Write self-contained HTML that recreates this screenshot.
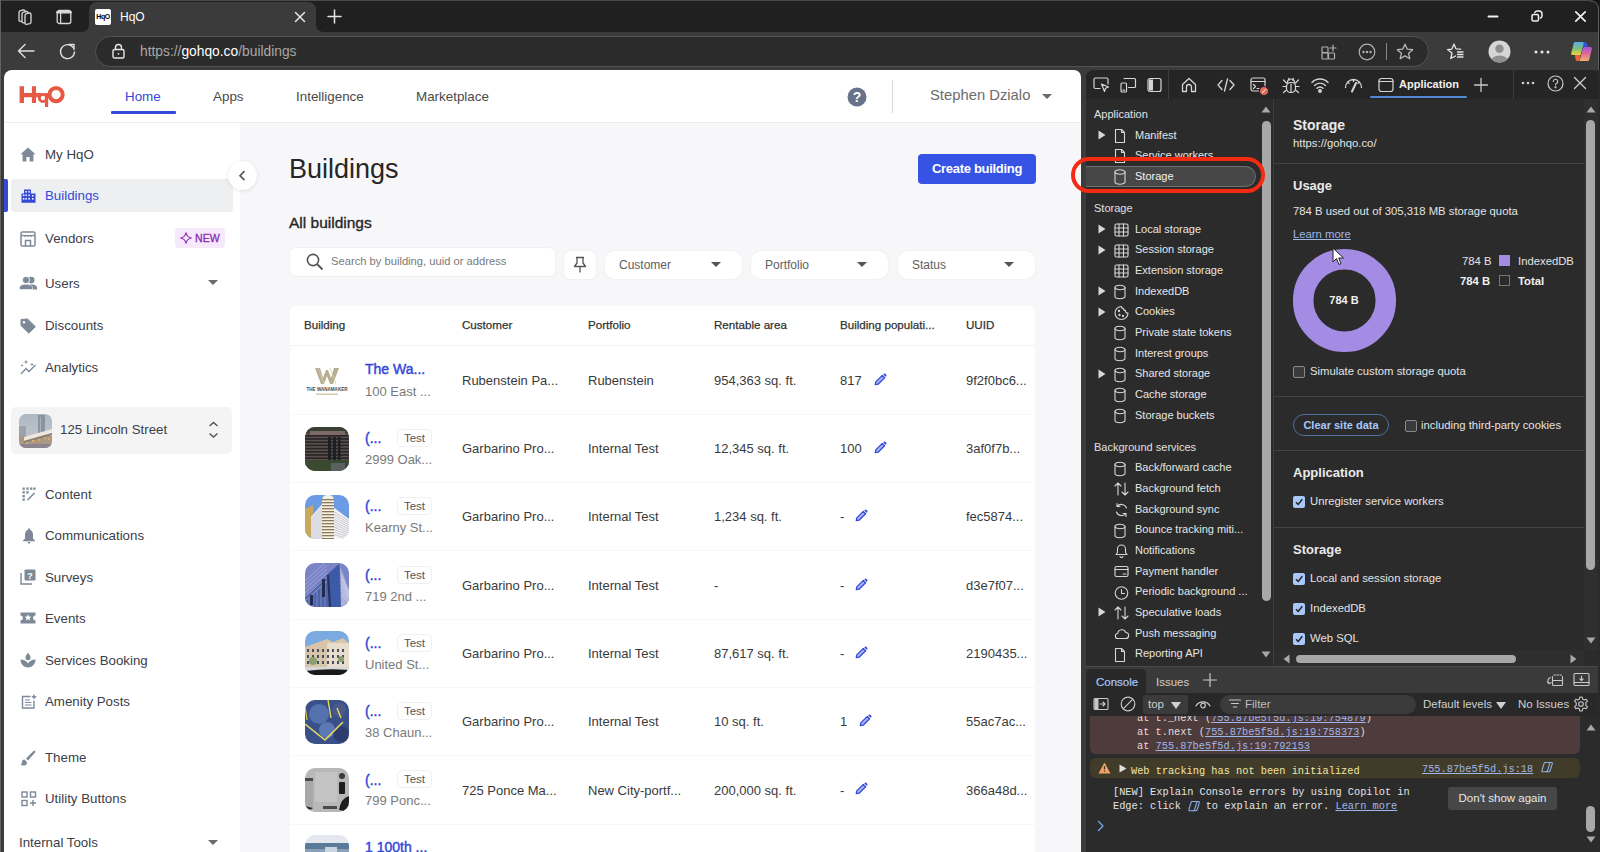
<!DOCTYPE html>
<html><head><meta charset="utf-8">
<style>
*{box-sizing:border-box;margin:0;padding:0}
html,body{width:1600px;height:852px;overflow:hidden;background:#3b3b3b;font-family:"Liberation Sans",sans-serif}
.a{position:absolute}
svg{display:block;overflow:visible}
.ic{position:absolute;fill:none;stroke:#d0d0d0;stroke-width:1.3;stroke-linecap:round;stroke-linejoin:round}
/* chrome */
#tabstrip{left:0;top:0;width:1600px;height:32px;background:#202020;border-top:1px solid #4a4a4a}
#acttab{left:89px;top:2px;width:227px;height:31px;background:#3b3b3b;border-radius:8px 8px 0 0}
#toolbar{left:0;top:32px;width:1600px;height:38px;background:#3b3b3b}
#addr{left:95px;top:36px;width:1334px;height:31px;background:#2b2b2b;border:1px solid #525252;border-radius:16px}
.ct{color:#fff;font-size:13px;white-space:nowrap}
/* page */
#page{left:4px;top:70px;width:1077px;height:782px;background:#fff;border-radius:8px 7px 0 0;overflow:hidden}
#dt{left:1086px;top:70px;width:514px;height:782px;background:#2a2a2a;border-radius:8px 0 0 0;overflow:hidden}
.nav{font-size:13.4px;color:#4a4a4a;white-space:nowrap}
.side{font-size:13.3px;white-space:nowrap}
.th{font-size:11.6px;color:#333;white-space:nowrap;-webkit-text-stroke:0.25px #333}
.td{font-size:13px;color:#3a3a3a;white-space:nowrap}
.dts{font-size:11px;white-space:nowrap}
.dtm{font-size:11.3px;color:#e3e3e3;white-space:nowrap}
.cb{width:12px;height:12px;border:1px solid #8a8a8a;border-radius:2px;background:#3a3a3a}
.mono{font-family:"Liberation Mono",monospace;font-size:10.3px;white-space:nowrap;line-height:14px}
.lk{color:#9fb7e8;text-decoration:underline}
</style></head><body>
<div id="tabstrip" class="a"></div>
<div class="a" style="left:0;top:0;width:1px;height:852px;background:#626262;z-index:5"></div>
<div id="acttab" class="a"></div>
<!-- tab bottom flares -->
<svg class="a" style="left:81px;top:24px" width="8" height="8"><path d="M0 8 Q8 8 8 0 V8Z" fill="#3b3b3b"/></svg>
<svg class="a" style="left:316px;top:24px" width="8" height="8"><path d="M8 8 Q0 8 0 0 V8Z" fill="#3b3b3b"/></svg>
<div id="toolbar" class="a"></div>
<!-- workspaces icon -->
<svg class="ic" style="left:16px;top:8px;stroke:#d8d8d8;stroke-width:1.3" width="18" height="18" viewBox="0 0 18 18"><path d="M3 4.5Q3 3 4.5 2.7L7.5 2Q9 1.8 9 3.3V11Q9 12.3 7.8 12.6L4.5 13.3Q3 13.6 3 12Z" fill="#202020"/><path d="M6 6Q6 4.5 7.5 4.2L10.5 3.5Q12 3.3 12 4.8V12.5Q12 13.8 10.8 14.1L7.5 14.8Q6 15.1 6 13.5Z" fill="#202020"/><path d="M9 7.5Q9 6 10.5 5.7L13.5 5Q15 4.8 15 6.3V14Q15 15.3 13.8 15.6L10.5 16.3Q9 16.6 9 15Z" fill="#202020"/></svg>
<!-- vertical tabs icon -->
<svg class="ic" style="left:56px;top:9px;stroke:#d8d8d8;stroke-width:1.3" width="16" height="16" viewBox="0 0 16 16"><rect x="1.2" y="1.5" width="13.6" height="13" rx="2"/><path d="M1.5 3.2H14.5" stroke-width="2.6"/><path d="M4.6 4V14.2"/></svg>
<!-- favicon -->
<div class="a" style="left:95px;top:9px;width:16px;height:16px;background:#fff;border-radius:2px;font:bold 7px 'Liberation Sans';color:#000;text-align:center;line-height:16px;letter-spacing:-0.5px">HqO</div>
<div class="a ct" style="left:120px;top:10px;font-size:12px">HqO</div>
<svg class="ic" style="left:294px;top:11px;stroke:#e6e6e6;stroke-width:1.5" width="12" height="12"><path d="M1.5 1.5L10.5 10.5M10.5 1.5L1.5 10.5"/></svg>
<svg class="ic" style="left:327px;top:9px;stroke:#e6e6e6;stroke-width:1.5" width="15" height="15"><path d="M7.5 1V14M1 7.5H14"/></svg>
<!-- window controls -->
<svg class="ic" style="left:1488px;top:15px;stroke:#f0f0f0;stroke-width:2" width="10" height="3"><path d="M0.5 1.5H9.5"/></svg>
<svg class="ic" style="left:1531px;top:10px;stroke:#f0f0f0;stroke-width:1.5" width="12" height="13"><rect x="1" y="4.5" width="6.5" height="6.5" rx="1.5"/><path d="M3.8 2.5A3 3 0 0 1 6.5 1H8A3 3 0 0 1 11 4V5.5A3 3 0 0 1 9.5 8.2"/></svg>
<svg class="ic" style="left:1575px;top:11px;stroke:#f0f0f0;stroke-width:1.7" width="11" height="11"><path d="M0.8 0.8L10.2 10.2M10.2 0.8L0.8 10.2"/></svg>
<!-- nav -->
<svg class="ic" style="left:17px;top:43px;stroke:#e0e0e0;stroke-width:1.4" width="18" height="16"><path d="M17 8H1.5M8 1.5L1.5 8L8 14.5"/></svg>
<svg class="ic" style="left:59px;top:43px;stroke:#e0e0e0;stroke-width:1.4" width="17" height="17"><path d="M14.5 5A7 7 0 1 0 15.5 9"/><path d="M10 1.5H15V6.5"/></svg>
<div id="addr" class="a"></div>
<svg class="ic" style="left:112px;top:43px;stroke:#e6e6e6;stroke-width:1.4" width="13" height="16"><rect x="1" y="6.5" width="11" height="8.5" rx="1.5"/><path d="M3.5 6.5V4.5a3 3 0 0 1 6 0V6.5"/><circle cx="6.5" cy="10.8" r="0.9" fill="#e6e6e6" stroke="none"/></svg>
<div class="a" style="left:140px;top:44px;font-size:13.8px;color:#a8a8a8;white-space:nowrap">https://<span style="color:#fff">gohqo.co</span>/buildings</div>
<!-- right icons -->
<svg class="ic" style="left:1321px;top:44px;stroke:#b0b0b0;stroke-width:1.2" width="17" height="16"><rect x="1" y="3" width="6" height="5.5" rx="0.8"/><rect x="1" y="9" width="6" height="6" rx="0.8"/><rect x="7.5" y="9" width="6" height="6" rx="0.8"/><path d="M12 1V7M9 4H15"/></svg>
<svg class="ic" style="left:1358px;top:43px;stroke:#b0b0b0;stroke-width:1.2" width="18" height="18"><circle cx="9" cy="9" r="7.8"/><circle cx="5.5" cy="9" r="0.6" fill="#b0b0b0"/><circle cx="9" cy="9" r="0.6" fill="#b0b0b0"/><circle cx="12.5" cy="9" r="0.6" fill="#b0b0b0"/></svg>
<div class="a" style="left:1386px;top:43px;width:1px;height:17px;background:#8a8a8a"></div>
<svg class="ic" style="left:1396px;top:43px;stroke:#b8b8b8;stroke-width:1.3" width="18" height="17"><path d="M9 1.2L11.3 6.2L16.7 6.7L12.6 10.3L13.8 15.7L9 12.9L4.2 15.7L5.4 10.3L1.3 6.7L6.7 6.2Z"/></svg>
<svg class="ic" style="left:1446px;top:43px;stroke:#e6e6e6;stroke-width:1.3" width="20" height="17"><path d="M8 1.2L10 5.8L14.6 6.2M6 10L1.5 6.6L5.8 6.1L8 1.2M6 10L4.8 15.5L9.5 13"/><path d="M11.5 9H17M11.5 11.5H17M11.5 14H17"/></svg>
<svg class="a" style="left:1488px;top:40px" width="23" height="23"><circle cx="11.5" cy="11.5" r="11" fill="#d6d6d6"/><circle cx="11.5" cy="8.8" r="4.2" fill="#8f8f8f"/><path d="M3.5 19a9 6.5 0 0 1 16 0 A11 11 0 0 1 3.5 19Z" fill="#8f8f8f"/></svg>
<svg class="a" style="left:1534px;top:50px" width="16" height="4"><circle cx="2" cy="2" r="1.5" fill="#e8e8e8"/><circle cx="8" cy="2" r="1.5" fill="#e8e8e8"/><circle cx="14" cy="2" r="1.5" fill="#e8e8e8"/></svg>
<svg class="a" style="left:1570px;top:41px" width="23" height="21" viewBox="0 0 23 21">
<defs><linearGradient id="cpl" x1="0" y1="0" x2="0" y2="1"><stop offset="0" stop-color="#58aef2"/><stop offset="0.5" stop-color="#7cc07a"/><stop offset="1" stop-color="#ecd23a"/></linearGradient>
<linearGradient id="cpr" x1="0" y1="0" x2="0" y2="1"><stop offset="0" stop-color="#a552e0"/><stop offset="0.5" stop-color="#e46a92"/><stop offset="1" stop-color="#f4b26a"/></linearGradient></defs>
<path d="M12 1H15Q17 1 17.5 3.5L18.3 6.5H13Z" fill="#2f52d6"/>
<path d="M5 14H10.5L9.5 20H7.5Q6 20 5.6 18.5Z" fill="#e8623e"/>
<path d="M5 1H12.5Q14 1 13.6 2.8L10.6 14H2.5Q0.8 14 1.2 12.2L3.6 2.6Q4 1 5 1Z" fill="url(#cpl)"/>
<path d="M14.5 6H20.5Q22.3 6 21.9 7.8L19.3 18.4Q18.9 20 17.5 20H9.6L12.8 7.6Q13.2 6 14.5 6Z" fill="url(#cpr)"/>
</svg>
<div class="a" style="left:1598px;top:8px;width:1px;height:844px;background:#5e5e5e"></div><div class="a" style="left:1599px;top:0;width:1px;height:852px;background:#161616"></div><svg class="a" style="left:1590px;top:0" width="10" height="10"><path d="M0 0H10V10H9V8A8 8 0 0 0 1 0.5Z" fill="#161616"/><path d="M0 1A8 7.5 0 0 1 8.5 9" fill="none" stroke="#5e5e5e" stroke-width="1"/></svg>


<div id="page" class="a"></div>
<!-- header -->
<div class="a" style="left:4px;top:122px;width:1077px;height:1px;background:#ececef"></div>
<svg class="a" style="left:14px;top:80px" width="60" height="32" viewBox="0 0 60 32"><g fill="#e65a43">
<path d="M5.6 6.2H10V13H17.9V6.2H22V13H27V17.3H22V22.9H17.9V17.3H10V22.9H5.6Z"/>
<rect x="31" y="13" width="3.2" height="14" rx="0.5"/>
</g>
<circle cx="28.9" cy="18" r="3.6" fill="none" stroke="#e65a43" stroke-width="2.8"/>
<circle cx="42.1" cy="14.6" r="6.6" fill="none" stroke="#e65a43" stroke-width="4"/>
<path d="M33.8 11.5L36.5 8.5L37.5 11Z" fill="#e65a43"/>
</svg>
<div class="a nav" style="left:125px;top:89px;color:#3549d9">Home</div>
<div class="a" style="left:111px;top:111px;width:65px;height:2.5px;background:#3549d9;border-radius:1px"></div>
<div class="a nav" style="left:213px;top:89px">Apps</div>
<div class="a nav" style="left:296px;top:89px">Intelligence</div>
<div class="a nav" style="left:416px;top:89px">Marketplace</div>
<svg class="a" style="left:847px;top:87px" width="20" height="20"><circle cx="10" cy="10" r="9.5" fill="#67738a"/><text x="10" y="15" text-anchor="middle" font-family="Liberation Sans" font-weight="bold" font-size="14" fill="#fff">?</text></svg>
<div class="a" style="left:892px;top:80px;width:1px;height:33px;background:#d8d8d8"></div>
<div class="a" style="left:930px;top:87px;font-size:14.8px;color:#6b6b6b;white-space:nowrap">Stephen Dzialo</div>
<svg class="a" style="left:1042px;top:94px" width="10" height="5"><path d="M0 0H10L5 5Z" fill="#6b6b6b"/></svg>
<!-- content bg -->
<div class="a" style="left:240px;top:123px;width:841px;height:729px;background:#f7f7f9"></div>
<!-- sidebar -->
<div class="a" style="left:4px;top:179px;width:4px;height:33px;background:#3549d9;border-radius:0 2px 2px 0"></div>
<div class="a" style="left:11px;top:179px;width:222px;height:33px;background:#eeeff1;border-radius:4px"></div>
<div class="a" style="left:175px;top:228px;width:50px;height:20px;background:#f5e9fb;border-radius:4px"></div>
<svg class="a" style="left:180px;top:232px" width="12" height="12"><path d="M6 0.5Q6.8 5.2 11.5 6Q6.8 6.8 6 11.5Q5.2 6.8 0.5 6Q5.2 5.2 6 0.5Z" fill="none" stroke="#8a2bb0" stroke-width="1.2"/></svg>
<div class="a" style="left:195px;top:232px;font-size:10.6px;color:#8a2bb0;-webkit-text-stroke:0.3px #8a2bb0">NEW</div>
<div class="a" style="left:11px;top:407px;width:221px;height:47px;background:#f4f4f4;border-radius:5px"></div>
<div class="a" style="left:19px;top:414px;width:33px;height:34px;border-radius:7px;overflow:hidden"><svg width="33" height="34" viewBox="0 0 33 34"><defs><linearGradient id="lsky" x1="0" y1="0" x2="0" y2="1"><stop offset="0" stop-color="#aeb9c4"/><stop offset="1" stop-color="#c4c8cc"/></linearGradient></defs><rect width="33" height="34" fill="url(#lsky)"/><rect x="19" y="1" width="7" height="22" fill="#8994a0"/><rect x="21" y="3" width="1" height="18" fill="#a8b2bc"/><rect x="0" y="12" width="7" height="14" fill="#9ca2aa"/><rect x="0" y="22" width="33" height="12" fill="#a89884"/><path d="M5 23L33 15V19L5 27Z" fill="#ece6dc"/><path d="M5 27L33 19V21L5 29Z" fill="#8a7e74"/><g fill="#e8b060"><circle cx="8" cy="29" r="1"/><circle cx="14" cy="27" r="1.2"/><circle cx="20" cy="26" r="1"/><circle cx="26" cy="24" r="1.1"/><circle cx="30" cy="25" r="0.9"/></g><rect x="0" y="30" width="33" height="4" fill="#8c8490"/></svg></div>
<div class="a side" style="left:60px;top:422px;color:#3b4048">125 Lincoln Street</div>
<svg class="a" style="left:208px;top:421px" width="11" height="18"><path d="M1.5 5L5.5 1.5L9.5 5M1.5 12.5L5.5 16L9.5 12.5" fill="none" stroke="#555" stroke-width="1.5"/></svg>
<div class="a" style="left:19px;top:835px;font-size:13.3px;color:#3b4048;white-space:nowrap">Internal Tools</div>
<svg class="a" style="left:208px;top:840px" width="10" height="5"><path d="M0 0H10L5 5Z" fill="#6b6b6b"/></svg>
<svg class="a" style="left:208px;top:280px" width="10" height="5"><path d="M0 0H10L5 5Z" fill="#6b6b6b"/></svg>
<div class="a side" style="left:45px;top:147px;color:#3b4048">My HqO</div>
<div class="a side" style="left:45px;top:188px;color:#3549d9">Buildings</div>
<div class="a side" style="left:45px;top:231px;color:#3b4048">Vendors</div>
<div class="a side" style="left:45px;top:276px;color:#3b4048">Users</div>
<div class="a side" style="left:45px;top:318px;color:#3b4048">Discounts</div>
<div class="a side" style="left:45px;top:360px;color:#3b4048">Analytics</div>
<div class="a side" style="left:45px;top:487px;color:#3b4048">Content</div>
<div class="a side" style="left:45px;top:528px;color:#3b4048">Communications</div>
<div class="a side" style="left:45px;top:570px;color:#3b4048">Surveys</div>
<div class="a side" style="left:45px;top:611px;color:#3b4048">Events</div>
<div class="a side" style="left:45px;top:653px;color:#3b4048">Services Booking</div>
<div class="a side" style="left:45px;top:694px;color:#3b4048">Amenity Posts</div>
<div class="a side" style="left:45px;top:750px;color:#3b4048">Theme</div>
<div class="a side" style="left:45px;top:791px;color:#3b4048">Utility Buttons</div>




<!-- sidebar icons -->
<svg class="a" style="left:20px;top:147px" width="16" height="15"><path d="M8 0.5L0.5 7.3H2.6V14.5H6.4V10H9.6V14.5H13.4V7.3H15.5Z" fill="#7d8997"/></svg>
<svg class="a" style="left:21px;top:189px" width="15" height="14"><path d="M3 0.5H10V4.5H14.5V13.8H0.5V4.5H3Z" fill="#3549d9"/><g fill="#eeeff1"><rect x="4.3" y="2" width="1.6" height="1.6"/><rect x="7.3" y="2" width="1.6" height="1.6"/><rect x="1.8" y="5.5" width="1.6" height="1.6"/><rect x="4.3" y="5.5" width="1.6" height="1.6"/><rect x="7.3" y="5.5" width="1.6" height="1.6"/><rect x="11" y="6" width="1.6" height="1.6"/><rect x="1.8" y="9" width="1.6" height="1.6"/><rect x="4.3" y="9" width="1.6" height="1.6"/><rect x="7.3" y="9" width="1.6" height="1.6"/><rect x="11" y="9" width="1.6" height="1.6"/></g></svg>
<svg class="a" style="left:20px;top:231px" width="16" height="16"><rect x="1" y="1" width="14" height="14" rx="1.5" fill="none" stroke="#7d8997" stroke-width="1.5"/><path d="M1.5 5.2Q3.5 3.5 5 5.2Q6.5 3.5 8 5.2Q9.5 3.5 11 5.2Q12.5 3.5 14.5 5.2" fill="none" stroke="#7d8997" stroke-width="1.3"/><path d="M5.5 15V9.5H10.5V15" fill="none" stroke="#7d8997" stroke-width="1.5"/></svg>
<svg class="a" style="left:19px;top:276px" width="19" height="14"><circle cx="12.3" cy="4" r="3.2" fill="#7d8997"/><path d="M11 8.3C14.5 8.3 18 9.4 18 11.5V13.5H13.5Z" fill="#7d8997"/><circle cx="7" cy="4" r="3.6" fill="#7d8997" stroke="#fff" stroke-width="0.8"/><path d="M0.5 13.5V11.5C0.5 9.3 3.8 8.2 7 8.2S13.5 9.3 13.5 11.5V13.5Z" fill="#7d8997" stroke="#fff" stroke-width="0.6"/></svg>
<svg class="a" style="left:20px;top:318px" width="16" height="16"><path d="M1 1.5V7.5L8.8 15.2L15.3 8.7L7.5 1Z" fill="#7d8997" stroke="#7d8997" stroke-width="1" stroke-linejoin="round"/><circle cx="4" cy="4.3" r="1.2" fill="#fff"/></svg>
<svg class="a" style="left:20px;top:359px" width="17" height="16"><path d="M1 15L6 9.5L9 12.5L15.5 6" fill="none" stroke="#7d8997" stroke-width="1.3"/><path d="M6 0.5L6.6 2.4L8.5 3L6.6 3.6L6 5.5L5.4 3.6L3.5 3L5.4 2.4Z M2 5L2.4 6.1L3.5 6.5L2.4 6.9L2 8L1.6 6.9L0.5 6.5L1.6 6.1Z M12 3.5L12.5 5L14 5.5L12.5 6L12 7.5L11.5 6L10 5.5L11.5 5Z" fill="#7d8997"/></svg>
<svg class="a" style="left:22px;top:487px" width="14" height="14"><g fill="#7d8997"><rect x="0.5" y="0.5" width="2.3" height="2.3"/><rect x="0.5" y="4.2" width="2.3" height="2.3"/><rect x="0.5" y="8" width="2.3" height="2.3"/><rect x="0.5" y="11.5" width="2.3" height="2.3"/><rect x="4.3" y="0.5" width="2.3" height="2.3"/><rect x="4.3" y="4.2" width="2.3" height="2.3"/><rect x="8" y="0.5" width="2.3" height="2.3"/><rect x="11.3" y="0.5" width="2.3" height="2.3"/></g><path d="M5.5 13L12.5 6" stroke="#7d8997" stroke-width="1.6"/></svg>
<svg class="a" style="left:22px;top:528px" width="14" height="16"><path d="M7 1.2C4.3 1.8 3 4 3 6.5V10.5L1 12.5V13.3H13V12.5L11 10.5V6.5C11 4 9.7 1.8 7 1.2Z" fill="#7d8997"/><path d="M5.5 14a1.5 1.5 0 0 0 3 0Z" fill="#7d8997"/><circle cx="7" cy="1.2" r="1" fill="#7d8997"/></svg>
<svg class="a" style="left:20px;top:569px" width="16" height="16"><rect x="4.5" y="0.5" width="11" height="11" rx="1" fill="#7d8997"/><path d="M1 4V15H12" fill="none" stroke="#7d8997" stroke-width="1.4"/><text x="10" y="9.5" text-anchor="middle" font-family="Liberation Sans" font-weight="bold" font-size="9.5" fill="#fff">?</text></svg>
<svg class="a" style="left:20px;top:611px" width="16" height="14"><path d="M0.5 1.5H15.5V4.5A2.5 2.5 0 0 0 15.5 9.5V12.5H0.5V9.5A2.5 2.5 0 0 0 0.5 4.5Z" fill="#7d8997"/><path d="M8 3.2L9 5.6L11.4 5.7L9.5 7.2L10.2 9.6L8 8.2L5.8 9.6L6.5 7.2L4.6 5.7L7 5.6Z" fill="#fff"/></svg>
<svg class="a" style="left:20px;top:652px" width="16" height="16"><path d="M8 0.8C9.8 2.8 10.5 4.2 10.5 5.8A2.5 2.5 0 0 1 5.5 5.8C5.5 4.2 6.2 2.8 8 0.8Z" fill="#7d8997"/><path d="M0.5 7.5C3.5 7.5 6.8 9 8 11.5C9.2 9 12.5 7.5 15.5 7.5C15.5 12 12 15.5 8 15.5C4 15.5 0.5 12 0.5 7.5Z" fill="#7d8997"/></svg>
<svg class="a" style="left:21px;top:694px" width="16" height="15"><path d="M9.5 2.5H1.5V14H13V6.5" fill="none" stroke="#7d8997" stroke-width="1.4"/><path d="M4 6H9M4 8.5H10.5M4 11H10.5" stroke="#7d8997" stroke-width="1.2"/><path d="M13 0.5V5M10.8 2.8H15.3" stroke="#7d8997" stroke-width="1.4"/></svg>
<svg class="a" style="left:20px;top:750px" width="16" height="16"><path d="M15 1L14 0.5L6 8.5L8 10.5L15.5 2Z" fill="#7d8997"/><path d="M4.5 9.5C2.8 9.5 2 10.8 2 12C2 13 1.5 14 0.5 14.5C1.5 15.3 2.8 15.5 4 15.5C5.8 15.5 7 14.2 7 12.2Z" fill="#7d8997"/></svg>
<svg class="a" style="left:21px;top:791px" width="16" height="16"><g fill="none" stroke="#7d8997" stroke-width="1.4"><rect x="1" y="1" width="5" height="5"/><rect x="9.5" y="1" width="5" height="5"/><rect x="1" y="9.5" width="5" height="5"/><path d="M12 9V15M9 12H15"/></g></svg>
<!-- main content -->
<div class="a" style="left:228px;top:161px;width:29px;height:29px;border-radius:50%;background:#fff;box-shadow:0 1px 4px rgba(0,0,0,0.10)"></div>
<svg class="a" style="left:238px;top:170px" width="9" height="12"><path d="M6.5 1.2L2 5.7L6.5 10.2" fill="none" stroke="#5a5a5a" stroke-width="1.7"/></svg>
<div class="a" style="left:289px;top:154px;font-size:27px;color:#262626;white-space:nowrap">Buildings</div>
<div class="a" style="left:918px;top:154px;width:118px;height:30px;background:#3653e6;border-radius:4px;color:#fff;font-size:13px;letter-spacing:-0.3px;font-weight:bold;text-align:center;line-height:30px">Create building</div>
<div class="a" style="left:289px;top:214px;font-size:15.5px;color:#262626;white-space:nowrap;-webkit-text-stroke:0.35px #262626">All buildings</div>
<div class="a" style="left:290px;top:248px;width:265px;height:28px;background:#fff;border-radius:6px;box-shadow:0 0 0 1px #f0f0f2"></div>
<svg class="a" style="left:306px;top:253px" width="18" height="18"><circle cx="7" cy="7" r="5.6" fill="none" stroke="#555" stroke-width="1.6"/><path d="M11 11L16.5 16.5" stroke="#555" stroke-width="1.8"/></svg>
<div class="a" style="left:331px;top:255px;font-size:11.2px;color:#7a7a7a;white-space:nowrap">Search by building, uuid or address</div>
<div class="a" style="left:564px;top:251px;width:32px;height:28px;background:#fff;border-radius:6px;box-shadow:0 0 0 1px #f0f0f2"></div>
<svg class="a" style="left:572px;top:256px" width="16" height="18"><path d="M4 1.5H12M5 1.5V7L2.5 10.5H13.5L11 7V1.5M8 10.5V16.5" fill="none" stroke="#555" stroke-width="1.3" stroke-linejoin="round"/></svg>
<div class="a" style="left:605px;top:251px;width:137px;height:28px;background:#fff;border-radius:10px;box-shadow:0 0 0 1px #f2f2f4"></div>
<div class="a" style="left:619px;top:258px;font-size:12px;color:#606060;white-space:nowrap">Customer</div>
<svg class="a" style="left:711px;top:262px" width="10" height="5"><path d="M0 0H10L5 5Z" fill="#555"/></svg>
<div class="a" style="left:751px;top:251px;width:137px;height:28px;background:#fff;border-radius:10px;box-shadow:0 0 0 1px #f2f2f4"></div>
<div class="a" style="left:765px;top:258px;font-size:12px;color:#606060;white-space:nowrap">Portfolio</div>
<svg class="a" style="left:857px;top:262px" width="10" height="5"><path d="M0 0H10L5 5Z" fill="#555"/></svg>
<div class="a" style="left:898px;top:251px;width:137px;height:28px;background:#fff;border-radius:10px;box-shadow:0 0 0 1px #f2f2f4"></div>
<div class="a" style="left:912px;top:258px;font-size:12px;color:#606060;white-space:nowrap">Status</div>
<svg class="a" style="left:1004px;top:262px" width="10" height="5"><path d="M0 0H10L5 5Z" fill="#555"/></svg>

<!-- table card -->
<div class="a" style="left:290px;top:306px;width:745px;height:560px;background:#fff;border-radius:6px"></div>
<div class="a" style="left:290px;top:345px;width:745px;height:1px;background:#f2f2f4"></div>
<div class="a th" style="left:304px;top:318px">Building</div>
<div class="a th" style="left:462px;top:318px">Customer</div>
<div class="a th" style="left:588px;top:318px">Portfolio</div>
<div class="a th" style="left:714px;top:318px">Rentable area</div>
<div class="a th" style="left:840px;top:318px">Building populati...</div>
<div class="a th" style="left:966px;top:318px">UUID</div>

<div class="a" style="left:305px;top:358px;width:44px;height:44px;border-radius:10px;overflow:hidden"><svg width="44" height="44" viewBox="0 0 44 44"><rect width="44" height="44" fill="#fff"/><path d="M10 10H15L18 20L21 12H23L26 20L29 10H34L28 26H25L22 18L19 26H16Z" fill="#b8ad8e"/><path d="M13 10L19 26M25 10L31 26" stroke="#d8cfb8" stroke-width="0.8"/><text x="22" y="33" text-anchor="middle" font-family="Liberation Sans" font-weight="bold" font-size="5" fill="#4a4a4a" textLength="41" lengthAdjust="spacingAndGlyphs">THE WANAMAKER</text><rect x="11" y="35.5" width="22" height="1.3" fill="#cfc4a4"/></svg></div>
<div class="a" style="left:365px;top:361px;font-size:14px;color:#3549d9;-webkit-text-stroke:0.45px #3549d9;white-space:nowrap">The Wa...</div>
<div class="a td" style="left:365px;top:384px;color:#7a7a7a">100 East ...</div>
<div class="a td" style="left:462px;top:373px">Rubenstein Pa...</div>
<div class="a td" style="left:588px;top:373px">Rubenstein</div>
<div class="a td" style="left:714px;top:373px">954,363 sq. ft.</div>
<div class="a td" style="left:840px;top:373px">817</div>
<div class="a td" style="left:966px;top:373px">9f2f0bc6...</div>
<svg class="a" style="left:874px;top:373px" width="13" height="13"><path d="M1.3 11.7L1.8 8.9L8.3 2.4L10.6 4.7L4.1 11.2Z" fill="#aab6f2" stroke="#3549d9" stroke-width="1.3" stroke-linejoin="round"/><path d="M9.3 1.4L10 0.7Q10.6 0.2 11.2 0.7L12.3 1.8Q12.8 2.4 12.3 3L11.6 3.7Z" fill="#3549d9"/></svg>
<div class="a" style="left:290px;top:414px;width:745px;height:1px;background:#f7f7f9"></div>
<div class="a" style="left:305px;top:427px;width:44px;height:44px;border-radius:10px;overflow:hidden"><svg width="44" height="44" viewBox="0 0 44 44"><rect width="44" height="44" fill="#5a5050"/><rect width="44" height="6" fill="#3a3f35"/><rect x="5" y="4" width="35" height="4" fill="#7a6a68"/><rect x="0" y="8.0" width="44" height="1.6" fill="#2a2424"/><rect x="0" y="11.2" width="44" height="1.6" fill="#2a2424"/><rect x="0" y="14.4" width="44" height="1.6" fill="#2a2424"/><rect x="0" y="17.6" width="44" height="1.6" fill="#2a2424"/><rect x="0" y="20.8" width="44" height="1.6" fill="#2a2424"/><rect x="0" y="24.0" width="44" height="1.6" fill="#2a2424"/><rect x="0" y="27.2" width="44" height="1.6" fill="#2a2424"/><rect x="0" y="30.4" width="44" height="1.6" fill="#2a2424"/><rect x="0" y="33.6" width="44" height="1.6" fill="#2a2424"/><rect x="0" y="36.8" width="44" height="1.6" fill="#2a2424"/><rect x="23" y="10" width="3" height="24" fill="#1a2024"/><rect x="28" y="10" width="3" height="24" fill="#1a2024"/><rect x="33" y="10" width="2.5" height="24" fill="#1a2024"/><rect x="0" y="33" width="44" height="11" fill="#3a4a30"/><rect x="26" y="36" width="14" height="8" fill="#5a6060"/></svg></div>
<div class="a" style="left:365px;top:430px;font-size:14px;color:#3549d9;-webkit-text-stroke:0.45px #3549d9;white-space:nowrap">(...</div>
<div class="a" style="left:397px;top:429px;width:35px;height:18px;border:1px solid #f0f0f0;border-radius:5px;font-size:11.5px;color:#555;text-align:center;line-height:16px">Test</div>
<div class="a td" style="left:365px;top:452px;color:#7a7a7a">2999 Oak...</div>
<div class="a td" style="left:462px;top:441px">Garbarino Pro...</div>
<div class="a td" style="left:588px;top:441px">Internal Test</div>
<div class="a td" style="left:714px;top:441px">12,345 sq. ft.</div>
<div class="a td" style="left:840px;top:441px">100</div>
<div class="a td" style="left:966px;top:441px">3af0f7b...</div>
<svg class="a" style="left:874px;top:441px" width="13" height="13"><path d="M1.3 11.7L1.8 8.9L8.3 2.4L10.6 4.7L4.1 11.2Z" fill="#aab6f2" stroke="#3549d9" stroke-width="1.3" stroke-linejoin="round"/><path d="M9.3 1.4L10 0.7Q10.6 0.2 11.2 0.7L12.3 1.8Q12.8 2.4 12.3 3L11.6 3.7Z" fill="#3549d9"/></svg>
<div class="a" style="left:290px;top:482px;width:745px;height:1px;background:#f7f7f9"></div>
<div class="a" style="left:305px;top:495px;width:44px;height:44px;border-radius:10px;overflow:hidden"><svg width="44" height="44" viewBox="0 0 44 44"><rect width="44" height="44" fill="#6a9be4"/><path d="M0 14L8 10L10 44H0Z" fill="#c9a95a"/><path d="M6 22L18 8L44 24V44H6Z" fill="#ececf0"/><path d="M28 12L44 24V44H28Z" fill="#f4f4f6"/><path d="M28 16.0L44 26.0" stroke="#c4c4cc" stroke-width="0.9"/><path d="M28 18.6L44 28.0" stroke="#c4c4cc" stroke-width="0.9"/><path d="M28 21.2L44 30.0" stroke="#c4c4cc" stroke-width="0.9"/><path d="M28 23.8L44 32.0" stroke="#c4c4cc" stroke-width="0.9"/><path d="M28 26.4L44 34.0" stroke="#c4c4cc" stroke-width="0.9"/><path d="M28 29.0L44 36.0" stroke="#c4c4cc" stroke-width="0.9"/><path d="M28 31.6L44 38.0" stroke="#c4c4cc" stroke-width="0.9"/><path d="M28 34.2L44 40.0" stroke="#c4c4cc" stroke-width="0.9"/><path d="M28 36.8L44 42.0" stroke="#c4c4cc" stroke-width="0.9"/><path d="M28 39.4L44 44.0" stroke="#c4c4cc" stroke-width="0.9"/><path d="M6 24L18 10V44H6Z" fill="#dcdce4"/><rect x="17" y="0" width="12" height="44" rx="5" fill="#f6f1e2"/><rect x="17" y="4.0" width="12" height="1.3" fill="#8a7a58"/><rect x="17" y="7.0" width="12" height="1.3" fill="#8a7a58"/><rect x="17" y="10.0" width="12" height="1.3" fill="#8a7a58"/><rect x="17" y="13.0" width="12" height="1.3" fill="#8a7a58"/><rect x="17" y="16.0" width="12" height="1.3" fill="#8a7a58"/><rect x="17" y="19.0" width="12" height="1.3" fill="#8a7a58"/><rect x="17" y="22.0" width="12" height="1.3" fill="#8a7a58"/><rect x="17" y="25.0" width="12" height="1.3" fill="#8a7a58"/><rect x="17" y="28.0" width="12" height="1.3" fill="#8a7a58"/><rect x="17" y="31.0" width="12" height="1.3" fill="#8a7a58"/><rect x="17" y="34.0" width="12" height="1.3" fill="#8a7a58"/><rect x="17" y="37.0" width="12" height="1.3" fill="#8a7a58"/><rect x="17" y="40.0" width="12" height="1.3" fill="#8a7a58"/><rect x="17" y="43.0" width="12" height="1.3" fill="#8a7a58"/></svg></div>
<div class="a" style="left:365px;top:498px;font-size:14px;color:#3549d9;-webkit-text-stroke:0.45px #3549d9;white-space:nowrap">(...</div>
<div class="a" style="left:397px;top:497px;width:35px;height:18px;border:1px solid #f0f0f0;border-radius:5px;font-size:11.5px;color:#555;text-align:center;line-height:16px">Test</div>
<div class="a td" style="left:365px;top:520px;color:#7a7a7a">Kearny St...</div>
<div class="a td" style="left:462px;top:509px">Garbarino Pro...</div>
<div class="a td" style="left:588px;top:509px">Internal Test</div>
<div class="a td" style="left:714px;top:509px">1,234 sq. ft.</div>
<div class="a td" style="left:840px;top:509px">-</div>
<div class="a td" style="left:966px;top:509px">fec5874...</div>
<svg class="a" style="left:855px;top:509px" width="13" height="13"><path d="M1.3 11.7L1.8 8.9L8.3 2.4L10.6 4.7L4.1 11.2Z" fill="#aab6f2" stroke="#3549d9" stroke-width="1.3" stroke-linejoin="round"/><path d="M9.3 1.4L10 0.7Q10.6 0.2 11.2 0.7L12.3 1.8Q12.8 2.4 12.3 3L11.6 3.7Z" fill="#3549d9"/></svg>
<div class="a" style="left:290px;top:550px;width:745px;height:1px;background:#f7f7f9"></div>
<div class="a" style="left:305px;top:563px;width:44px;height:44px;border-radius:10px;overflow:hidden"><svg width="44" height="44" viewBox="0 0 44 44"><rect width="44" height="44" fill="#7c84c8"/><path d="M0 34L22 12L34 1L44 26V44H0Z" fill="#4f64a8"/><path d="M22 12L34 1L36 44H24Z" fill="#3c5aa8"/><path d="M35 3L44 26V44H36Z" fill="#aab0d8"/><path d="M0 38L22 18" stroke="#9aa8d8" stroke-width="0.9"/><path d="M0 34L22 14" stroke="#9aa8d8" stroke-width="0.9"/><path d="M0 30L22 10" stroke="#9aa8d8" stroke-width="0.9"/><path d="M0 26L22 6" stroke="#9aa8d8" stroke-width="0.9"/><path d="M0 22L22 2" stroke="#9aa8d8" stroke-width="0.9"/><path d="M0 18L22 -2" stroke="#9aa8d8" stroke-width="0.9"/><path d="M4 35V44" stroke="#8898c8" stroke-width="0.7"/><path d="M8 31V44" stroke="#8898c8" stroke-width="0.7"/><path d="M12 27V44" stroke="#8898c8" stroke-width="0.7"/><path d="M16 23V44" stroke="#8898c8" stroke-width="0.7"/><path d="M20 19V44" stroke="#8898c8" stroke-width="0.7"/><path d="M36 12L44 30" stroke="#d0d4ec" stroke-width="0.8"/><path d="M36 16L44 32" stroke="#d0d4ec" stroke-width="0.8"/><path d="M36 20L44 34" stroke="#d0d4ec" stroke-width="0.8"/><path d="M36 24L44 36" stroke="#d0d4ec" stroke-width="0.8"/><path d="M36 28L44 38" stroke="#d0d4ec" stroke-width="0.8"/><path d="M36 32L44 40" stroke="#d0d4ec" stroke-width="0.8"/><path d="M23 12L25 44" stroke="#2a2e58" stroke-width="2"/><rect x="17" y="16" width="3" height="18" fill="#1a1e40" opacity="0.85"/><rect x="5" y="32" width="3" height="10" fill="#1a1e40" opacity="0.85"/></svg></div>
<div class="a" style="left:365px;top:567px;font-size:14px;color:#3549d9;-webkit-text-stroke:0.45px #3549d9;white-space:nowrap">(...</div>
<div class="a" style="left:397px;top:566px;width:35px;height:18px;border:1px solid #f0f0f0;border-radius:5px;font-size:11.5px;color:#555;text-align:center;line-height:16px">Test</div>
<div class="a td" style="left:365px;top:589px;color:#7a7a7a">719 2nd ...</div>
<div class="a td" style="left:462px;top:578px">Garbarino Pro...</div>
<div class="a td" style="left:588px;top:578px">Internal Test</div>
<div class="a td" style="left:714px;top:578px">-</div>
<div class="a td" style="left:840px;top:578px">-</div>
<div class="a td" style="left:966px;top:578px">d3e7f07...</div>
<svg class="a" style="left:855px;top:578px" width="13" height="13"><path d="M1.3 11.7L1.8 8.9L8.3 2.4L10.6 4.7L4.1 11.2Z" fill="#aab6f2" stroke="#3549d9" stroke-width="1.3" stroke-linejoin="round"/><path d="M9.3 1.4L10 0.7Q10.6 0.2 11.2 0.7L12.3 1.8Q12.8 2.4 12.3 3L11.6 3.7Z" fill="#3549d9"/></svg>
<div class="a" style="left:290px;top:619px;width:745px;height:1px;background:#f7f7f9"></div>
<div class="a" style="left:305px;top:631px;width:44px;height:44px;border-radius:10px;overflow:hidden"><svg width="44" height="44" viewBox="0 0 44 44"><rect width="44" height="44" fill="#7aaae0"/><path d="M0 16L22 8L28 11L38 7L44 12V40H0Z" fill="#d8c4a8"/><path d="M22 12L44 12V40H22Z" fill="#e8dccc"/><rect x="2" y="18" width="2" height="3" fill="#4a5060"/><rect x="7" y="18" width="2" height="3" fill="#4a5060"/><rect x="12" y="18" width="2" height="3" fill="#4a5060"/><rect x="17" y="18" width="2" height="3" fill="#4a5060"/><rect x="22" y="18" width="2" height="3" fill="#4a5060"/><rect x="27" y="18" width="2" height="3" fill="#4a5060"/><rect x="32" y="18" width="2" height="3" fill="#4a5060"/><rect x="37" y="18" width="2" height="3" fill="#4a5060"/><rect x="2" y="24" width="2" height="3" fill="#4a5060"/><rect x="7" y="24" width="2" height="3" fill="#4a5060"/><rect x="12" y="24" width="2" height="3" fill="#4a5060"/><rect x="17" y="24" width="2" height="3" fill="#4a5060"/><rect x="22" y="24" width="2" height="3" fill="#4a5060"/><rect x="27" y="24" width="2" height="3" fill="#4a5060"/><rect x="32" y="24" width="2" height="3" fill="#4a5060"/><rect x="37" y="24" width="2" height="3" fill="#4a5060"/><rect x="2" y="30" width="2" height="3" fill="#4a5060"/><rect x="7" y="30" width="2" height="3" fill="#4a5060"/><rect x="12" y="30" width="2" height="3" fill="#4a5060"/><rect x="17" y="30" width="2" height="3" fill="#4a5060"/><rect x="22" y="30" width="2" height="3" fill="#4a5060"/><rect x="27" y="30" width="2" height="3" fill="#4a5060"/><rect x="32" y="30" width="2" height="3" fill="#4a5060"/><rect x="37" y="30" width="2" height="3" fill="#4a5060"/><circle cx="8" cy="30" r="4" fill="#8aa070"/><circle cx="36" cy="28" r="3" fill="#8aa070"/><rect x="0" y="36" width="44" height="4" fill="#d8d8d8"/><path d="M0 44V40Q22 37 44 39V44Z" fill="#1a1a1a"/></svg></div>
<div class="a" style="left:365px;top:635px;font-size:14px;color:#3549d9;-webkit-text-stroke:0.45px #3549d9;white-space:nowrap">(...</div>
<div class="a" style="left:397px;top:634px;width:35px;height:18px;border:1px solid #f0f0f0;border-radius:5px;font-size:11.5px;color:#555;text-align:center;line-height:16px">Test</div>
<div class="a td" style="left:365px;top:657px;color:#7a7a7a">United St...</div>
<div class="a td" style="left:462px;top:646px">Garbarino Pro...</div>
<div class="a td" style="left:588px;top:646px">Internal Test</div>
<div class="a td" style="left:714px;top:646px">87,617 sq. ft.</div>
<div class="a td" style="left:840px;top:646px">-</div>
<div class="a td" style="left:966px;top:646px">2190435...</div>
<svg class="a" style="left:855px;top:646px" width="13" height="13"><path d="M1.3 11.7L1.8 8.9L8.3 2.4L10.6 4.7L4.1 11.2Z" fill="#aab6f2" stroke="#3549d9" stroke-width="1.3" stroke-linejoin="round"/><path d="M9.3 1.4L10 0.7Q10.6 0.2 11.2 0.7L12.3 1.8Q12.8 2.4 12.3 3L11.6 3.7Z" fill="#3549d9"/></svg>
<div class="a" style="left:290px;top:687px;width:745px;height:1px;background:#f7f7f9"></div>
<div class="a" style="left:305px;top:700px;width:44px;height:44px;border-radius:10px;overflow:hidden"><svg width="44" height="44" viewBox="0 0 44 44"><rect width="44" height="44" fill="#3a5088"/><circle cx="14" cy="14" r="10" fill="#5a7ab8" opacity="0.8"/><circle cx="22" cy="30" r="8" fill="#6a8ac8" opacity="0.7"/><circle cx="36" cy="34" r="8" fill="#2a3a68" opacity="0.8"/><circle cx="34" cy="10" r="7" fill="#4a5a88"/><path d="M0 24L20 40L38 22" fill="none" stroke="#e8d860" stroke-width="1.6"/><path d="M23 0L26 18M32 8L36 18" fill="none" stroke="#e8d860" stroke-width="1.4"/><path d="M0 6L2 20" stroke="#e8c850" stroke-width="1.2"/></svg></div>
<div class="a" style="left:365px;top:703px;font-size:14px;color:#3549d9;-webkit-text-stroke:0.45px #3549d9;white-space:nowrap">(...</div>
<div class="a" style="left:397px;top:702px;width:35px;height:18px;border:1px solid #f0f0f0;border-radius:5px;font-size:11.5px;color:#555;text-align:center;line-height:16px">Test</div>
<div class="a td" style="left:365px;top:725px;color:#7a7a7a">38 Chaun...</div>
<div class="a td" style="left:462px;top:714px">Garbarino Pro...</div>
<div class="a td" style="left:588px;top:714px">Internal Test</div>
<div class="a td" style="left:714px;top:714px">10 sq. ft.</div>
<div class="a td" style="left:840px;top:714px">1</div>
<div class="a td" style="left:966px;top:714px">55ac7ac...</div>
<svg class="a" style="left:859px;top:714px" width="13" height="13"><path d="M1.3 11.7L1.8 8.9L8.3 2.4L10.6 4.7L4.1 11.2Z" fill="#aab6f2" stroke="#3549d9" stroke-width="1.3" stroke-linejoin="round"/><path d="M9.3 1.4L10 0.7Q10.6 0.2 11.2 0.7L12.3 1.8Q12.8 2.4 12.3 3L11.6 3.7Z" fill="#3549d9"/></svg>
<div class="a" style="left:290px;top:755px;width:745px;height:1px;background:#f7f7f9"></div>
<div class="a" style="left:305px;top:768px;width:44px;height:44px;border-radius:10px;overflow:hidden"><svg width="44" height="44" viewBox="0 0 44 44"><rect width="44" height="44" fill="#b8b8b8"/><rect x="10" y="4" width="22" height="30" fill="#c4c4c4"/><rect x="0" y="10" width="8" height="30" fill="#a8a8a8"/><rect x="0" y="10" width="8" height="3" fill="#4a4a4a"/><rect x="34" y="14" width="6" height="12" rx="1" fill="#1e1e1e"/><path d="M34 42Q36 30 44 28V44Z" fill="#1e1e1e"/><circle cx="37" cy="8" r="3" fill="#3a3a3a"/><path d="M0 38Q4 44 8 40Z" fill="#2a2a2a"/><rect x="18" y="38" width="14" height="3" fill="#4a4a4a"/></svg></div>
<div class="a" style="left:365px;top:772px;font-size:14px;color:#3549d9;-webkit-text-stroke:0.45px #3549d9;white-space:nowrap">(...</div>
<div class="a" style="left:397px;top:770px;width:35px;height:18px;border:1px solid #f0f0f0;border-radius:5px;font-size:11.5px;color:#555;text-align:center;line-height:16px">Test</div>
<div class="a td" style="left:365px;top:793px;color:#7a7a7a">799 Ponc...</div>
<div class="a td" style="left:462px;top:783px">725 Ponce Ma...</div>
<div class="a td" style="left:588px;top:783px">New City-portf...</div>
<div class="a td" style="left:714px;top:783px">200,000 sq. ft.</div>
<div class="a td" style="left:840px;top:783px">-</div>
<div class="a td" style="left:966px;top:783px">366a48d...</div>
<svg class="a" style="left:855px;top:782px" width="13" height="13"><path d="M1.3 11.7L1.8 8.9L8.3 2.4L10.6 4.7L4.1 11.2Z" fill="#aab6f2" stroke="#3549d9" stroke-width="1.3" stroke-linejoin="round"/><path d="M9.3 1.4L10 0.7Q10.6 0.2 11.2 0.7L12.3 1.8Q12.8 2.4 12.3 3L11.6 3.7Z" fill="#3549d9"/></svg>
<div class="a" style="left:290px;top:824px;width:745px;height:1px;background:#f7f7f9"></div>
<div class="a" style="left:305px;top:835px;width:44px;height:44px;border-radius:10px;overflow:hidden"><svg width="44" height="44"><rect width="44" height="8" fill="#e4e8ee"/><rect y="8" width="44" height="36" fill="#5a7a9a"/><rect x="0" y="14" width="44" height="4" fill="#8aa0b8"/><rect x="20" y="12" width="12" height="6" fill="#c8d4e0"/></svg></div>
<div class="a" style="left:365px;top:839px;font-size:14px;color:#3549d9;-webkit-text-stroke:0.45px #3549d9;white-space:nowrap">1 100th ...</div>



<div id="dt" class="a"></div>
<div class="a" style="left:1086px;top:70px;width:512px;height:29px;background:#252525;border-radius:8px 8px 0 0"></div>
<!-- toolbar icons -->
<svg class="ic" style="left:1093px;top:77px;stroke:#d6d6d6;stroke-width:1.2" width="17" height="16"><path d="M7 11.5H2.5a1.5 1.5 0 0 1-1.5-1.5V2.5A1.5 1.5 0 0 1 2.5 1H13.5A1.5 1.5 0 0 1 15 2.5V7"/><path d="M8.5 7L15.5 10L12.5 11.2L11.5 14.5Z"/></svg>
<svg class="ic" style="left:1120px;top:77px;stroke:#d6d6d6;stroke-width:1.2" width="17" height="16"><rect x="1" y="6" width="5.5" height="9" rx="1"/><path d="M4 1.5H14.5a1 1 0 0 1 1 1V9.5a1 1 0 0 1-1 1H8.5"/><path d="M3 13.2H4.5"/></svg>
<svg class="ic" style="left:1147px;top:77px;stroke:#d6d6d6;stroke-width:1.2" width="15" height="16"><rect x="1" y="1.5" width="13" height="13" rx="2"/><rect x="2" y="2.5" width="4" height="11" fill="#d6d6d6" stroke="none"/></svg>
<div class="a" style="left:1168px;top:70px;width:1px;height:29px;background:#3e3e3e"></div>
<svg class="ic" style="left:1181px;top:77px;stroke:#d6d6d6;stroke-width:1.3" width="16" height="16"><path d="M1.5 7.5L8 1.5L14.5 7.5V14.5H10.5V10a2.5 2.5 0 0 0-5 0V14.5H1.5Z"/></svg>
<svg class="ic" style="left:1217px;top:78px;stroke:#d6d6d6;stroke-width:1.3" width="18" height="14"><path d="M5 2.5L1 7L5 11.5M13 2.5L17 7L13 11.5M10.5 1L7.5 13"/></svg>
<svg class="ic" style="left:1250px;top:77px;stroke:#d6d6d6;stroke-width:1.2" width="16" height="16"><rect x="1" y="1" width="14" height="13" rx="2"/><path d="M1 4.5H15M3.5 7.5L5.5 9.5L3.5 11.5M7 11.5H9"/></svg>
<svg class="a" style="left:1259px;top:86px" width="10" height="10"><circle cx="5" cy="5" r="4.5" fill="#e26d5f" stroke="#252525" stroke-width="1"/><path d="M3.2 6.8L6.8 3.2" stroke="#fff" stroke-width="0.9"/></svg>
<svg class="ic" style="left:1282px;top:77px;stroke:#d6d6d6;stroke-width:1.2" width="18" height="17"><path d="M5.5 5.5a3.5 3.5 0 0 1 7 0"/><rect x="4.5" y="5.5" width="9" height="10" rx="4"/><path d="M9 7V15M1.5 3L4.5 6M16.5 3L13.5 6M1 9.5H4.5M13.5 9.5H17M1.5 15.5L4.5 13M16.5 15.5L13.5 13M6.5 1.5L7.5 3M11.5 1.5L10.5 3"/></svg>
<svg class="ic" style="left:1311px;top:77px;stroke:#d6d6d6;stroke-width:1.4" width="18" height="16"><path d="M1 5.5a11 11 0 0 1 16 0M3.5 8.5a7.5 7.5 0 0 1 11 0M6 11.3a4 4 0 0 1 6 0"/><circle cx="9" cy="14" r="1.2" fill="#d6d6d6"/></svg>
<svg class="ic" style="left:1344px;top:77px;stroke:#d6d6d6;stroke-width:1.3" width="19" height="16"><path d="M1.5 10.5A8 8 0 0 1 17.5 10.5M9.5 2.5V4.5M3.5 5L5 6.3M15.5 5L14 6.3"/><path d="M8 14.5L12 6" stroke-width="2"/></svg>
<svg class="ic" style="left:1378px;top:77px;stroke:#d6d6d6;stroke-width:1.2" width="16" height="16"><rect x="1" y="1.5" width="14" height="13" rx="2.5"/><path d="M1 4.5H15"/></svg>
<div class="a" style="left:1399px;top:78px;font-size:11px;font-weight:bold;color:#f0f0f0;white-space:nowrap">Application</div>
<div class="a" style="left:1370px;top:96px;width:97px;height:2px;background:#4f89d6;border-radius:1px"></div>
<svg class="ic" style="left:1474px;top:78px;stroke:#c8c8c8;stroke-width:1.3" width="14" height="14"><path d="M7 0.5V13.5M0.5 7H13.5"/></svg>
<div class="a" style="left:1513px;top:70px;width:1px;height:29px;background:#3e3e3e"></div>
<svg class="a" style="left:1521px;top:81px" width="14" height="4"><circle cx="2" cy="2" r="1.3" fill="#d0d0d0"/><circle cx="7" cy="2" r="1.3" fill="#d0d0d0"/><circle cx="12" cy="2" r="1.3" fill="#d0d0d0"/></svg>
<svg class="ic" style="left:1547px;top:75px;stroke:#c8c8c8;stroke-width:1.2" width="17" height="17"><circle cx="8.5" cy="8.5" r="7.5"/><path d="M6.3 6.5a2.2 2.2 0 1 1 3 2c-.7.3-.8.8-.8 1.6"/><circle cx="8.5" cy="12.3" r="0.5" fill="#c8c8c8"/></svg>
<svg class="ic" style="left:1574px;top:77px;stroke:#d0d0d0;stroke-width:1.3" width="12" height="12"><path d="M0.5 0.5L11.5 11.5M11.5 0.5L0.5 11.5"/></svg>
<!-- sidebar -->
<div class="a" style="left:1086px;top:99px;width:187px;height:567px;background:#2b2b2b"></div>
<div class="a" style="left:1273px;top:99px;width:1px;height:567px;background:#3d3d3d"></div>
<div class="a" style="left:1274px;top:99px;width:324px;height:567px;background:#2b2b2b"></div>
<svg class="a" style="left:1261px;top:106px" width="10" height="7"><path d="M0.5 6.5L5 0.5L9.5 6.5Z" fill="#a8a8a8"/></svg>
<div class="a" style="left:1262px;top:121px;width:9px;height:480px;background:#a8a8a8;border-radius:5px"></div>
<svg class="a" style="left:1261px;top:651px" width="10" height="7"><path d="M0.5 0.5L5 6.5L9.5 0.5Z" fill="#a8a8a8"/></svg>
<div class="a dts" style="left:1094px;top:108px;color:#e0e0e0">Application</div>
<svg class="a" style="left:1098px;top:130px" width="8" height="10"><path d="M0.5 0.5L7.5 5L0.5 9.5Z" fill="#d8d8d8"/></svg>
<svg class="ic" style="left:1114px;top:128px;stroke:#d6d6d6;stroke-width:1.1" width="15" height="16"><path d="M1.5 1.5H7.5L10.5 4.5V14.5H1.5Z M7.5 1.5V4.5H10.5"/></svg>
<div class="a dts" style="left:1135px;top:129px;color:#e6e6e6">Manifest</div>
<div class="a" style="left:1086px;top:146px;width:175px;height:19px;overflow:hidden"><svg class="ic" style="left:28px;top:2px;stroke:#d6d6d6;stroke-width:1.1" width="15" height="16"><path d="M1.5 1.5H7.5L10.5 4.5V14.5H1.5Z M7.5 1.5V4.5H10.5"/></svg><div class="a dts" style="left:49px;top:3px;color:#e6e6e6">Service workers</div></div>
<div class="a dts" style="left:1094px;top:202px;color:#e0e0e0">Storage</div>
<svg class="a" style="left:1098px;top:224px" width="8" height="10"><path d="M0.5 0.5L7.5 5L0.5 9.5Z" fill="#d8d8d8"/></svg>
<svg class="ic" style="left:1114px;top:222px;stroke:#d6d6d6;stroke-width:1.1" width="15" height="16"><rect x="1" y="2" width="13" height="12" rx="1.5"/><path d="M1 6H14M1 10H14M5 2V14M9.5 2V14"/></svg>
<div class="a dts" style="left:1135px;top:223px;color:#e6e6e6">Local storage</div>
<svg class="a" style="left:1098px;top:245px" width="8" height="10"><path d="M0.5 0.5L7.5 5L0.5 9.5Z" fill="#d8d8d8"/></svg>
<svg class="ic" style="left:1114px;top:243px;stroke:#d6d6d6;stroke-width:1.1" width="15" height="16"><rect x="1" y="2" width="13" height="12" rx="1.5"/><path d="M1 6H14M1 10H14M5 2V14M9.5 2V14"/></svg>
<div class="a dts" style="left:1135px;top:243px;color:#e6e6e6">Session storage</div>
<svg class="ic" style="left:1114px;top:263px;stroke:#d6d6d6;stroke-width:1.1" width="15" height="16"><rect x="1" y="2" width="13" height="12" rx="1.5"/><path d="M1 6H14M1 10H14M5 2V14M9.5 2V14"/></svg>
<div class="a dts" style="left:1135px;top:264px;color:#e6e6e6">Extension storage</div>
<svg class="a" style="left:1098px;top:286px" width="8" height="10"><path d="M0.5 0.5L7.5 5L0.5 9.5Z" fill="#d8d8d8"/></svg>
<svg class="ic" style="left:1114px;top:284px;stroke:#d6d6d6;stroke-width:1.1" width="15" height="16"><ellipse cx="6" cy="3.5" rx="5" ry="2.2"/><path d="M1 3.5V12.5a5 2.2 0 0 0 10 0V3.5"/></svg>
<div class="a dts" style="left:1135px;top:285px;color:#e6e6e6">IndexedDB</div>
<svg class="a" style="left:1098px;top:307px" width="8" height="10"><path d="M0.5 0.5L7.5 5L0.5 9.5Z" fill="#d8d8d8"/></svg>
<svg class="ic" style="left:1114px;top:305px;stroke:#d6d6d6;stroke-width:1.1" width="15" height="16"><path d="M7.5 1.5a6.5 6.5 0 1 0 6.5 6.5a2 2 0 0 1-2.5-2.5a2 2 0 0 1-2-2a2 2 0 0 1-2-2Z"/><circle cx="5" cy="6" r="0.6"/><circle cx="5.5" cy="10" r="0.6"/><circle cx="9" cy="11" r="0.6"/></svg>
<div class="a dts" style="left:1135px;top:305px;color:#e6e6e6">Cookies</div>
<svg class="ic" style="left:1114px;top:325px;stroke:#d6d6d6;stroke-width:1.1" width="15" height="16"><ellipse cx="6" cy="3.5" rx="5" ry="2.2"/><path d="M1 3.5V12.5a5 2.2 0 0 0 10 0V3.5"/></svg>
<div class="a dts" style="left:1135px;top:326px;color:#e6e6e6">Private state tokens</div>
<svg class="ic" style="left:1114px;top:346px;stroke:#d6d6d6;stroke-width:1.1" width="15" height="16"><ellipse cx="6" cy="3.5" rx="5" ry="2.2"/><path d="M1 3.5V12.5a5 2.2 0 0 0 10 0V3.5"/></svg>
<div class="a dts" style="left:1135px;top:347px;color:#e6e6e6">Interest groups</div>
<svg class="a" style="left:1098px;top:369px" width="8" height="10"><path d="M0.5 0.5L7.5 5L0.5 9.5Z" fill="#d8d8d8"/></svg>
<svg class="ic" style="left:1114px;top:367px;stroke:#d6d6d6;stroke-width:1.1" width="15" height="16"><ellipse cx="6" cy="3.5" rx="5" ry="2.2"/><path d="M1 3.5V12.5a5 2.2 0 0 0 10 0V3.5"/></svg>
<div class="a dts" style="left:1135px;top:367px;color:#e6e6e6">Shared storage</div>
<svg class="ic" style="left:1114px;top:387px;stroke:#d6d6d6;stroke-width:1.1" width="15" height="16"><ellipse cx="6" cy="3.5" rx="5" ry="2.2"/><path d="M1 3.5V12.5a5 2.2 0 0 0 10 0V3.5"/></svg>
<div class="a dts" style="left:1135px;top:388px;color:#e6e6e6">Cache storage</div>
<svg class="ic" style="left:1114px;top:408px;stroke:#d6d6d6;stroke-width:1.1" width="15" height="16"><ellipse cx="6" cy="3.5" rx="5" ry="2.2"/><path d="M1 3.5V12.5a5 2.2 0 0 0 10 0V3.5"/></svg>
<div class="a dts" style="left:1135px;top:409px;color:#e6e6e6">Storage buckets</div>
<div class="a dts" style="left:1094px;top:441px;color:#e0e0e0">Background services</div>
<svg class="ic" style="left:1114px;top:461px;stroke:#d6d6d6;stroke-width:1.1" width="15" height="16"><ellipse cx="6" cy="3.5" rx="5" ry="2.2"/><path d="M1 3.5V12.5a5 2.2 0 0 0 10 0V3.5"/></svg>
<div class="a dts" style="left:1135px;top:461px;color:#e6e6e6">Back/forward cache</div>
<svg class="ic" style="left:1114px;top:481px;stroke:#d6d6d6;stroke-width:1.1" width="15" height="16"><path d="M4 14V2M1 5L4 2L7 5M11 2V14M8 11L11 14L14 11"/></svg>
<div class="a dts" style="left:1135px;top:482px;color:#e6e6e6">Background fetch</div>
<svg class="ic" style="left:1114px;top:502px;stroke:#d6d6d6;stroke-width:1.1" width="15" height="16"><path d="M12.5 6A5.5 5.5 0 0 0 3 4.5M2.5 10A5.5 5.5 0 0 0 12 11.5M3 1.5V4.5H6M12 14.5V11.5H9"/></svg>
<div class="a dts" style="left:1135px;top:503px;color:#e6e6e6">Background sync</div>
<svg class="ic" style="left:1114px;top:523px;stroke:#d6d6d6;stroke-width:1.1" width="15" height="16"><ellipse cx="6" cy="3.5" rx="5" ry="2.2"/><path d="M1 3.5V12.5a5 2.2 0 0 0 10 0V3.5"/></svg>
<div class="a dts" style="left:1135px;top:523px;color:#e6e6e6">Bounce tracking miti...</div>
<svg class="ic" style="left:1114px;top:543px;stroke:#d6d6d6;stroke-width:1.1" width="15" height="16"><path d="M2 11.5H13L11.5 9.5V6a4 4 0 0 0-8 0V9.5Z M6 13.5a1.6 1.6 0 0 0 3 0"/></svg>
<div class="a dts" style="left:1135px;top:544px;color:#e6e6e6">Notifications</div>
<svg class="ic" style="left:1114px;top:564px;stroke:#d6d6d6;stroke-width:1.1" width="15" height="16"><rect x="1" y="2.5" width="13" height="10" rx="1.5"/><path d="M1 5.5H14M9 10H12"/></svg>
<div class="a dts" style="left:1135px;top:565px;color:#e6e6e6">Payment handler</div>
<svg class="ic" style="left:1114px;top:585px;stroke:#d6d6d6;stroke-width:1.1" width="15" height="16"><circle cx="7.5" cy="8" r="6.3"/><path d="M7.5 4.5V8.5H10.5"/></svg>
<div class="a dts" style="left:1135px;top:585px;color:#e6e6e6">Periodic background ...</div>
<svg class="a" style="left:1098px;top:607px" width="8" height="10"><path d="M0.5 0.5L7.5 5L0.5 9.5Z" fill="#d8d8d8"/></svg>
<svg class="ic" style="left:1114px;top:605px;stroke:#d6d6d6;stroke-width:1.1" width="15" height="16"><path d="M4 14V2M1 5L4 2L7 5M11 2V14M8 11L11 14L14 11"/></svg>
<div class="a dts" style="left:1135px;top:606px;color:#e6e6e6">Speculative loads</div>
<svg class="ic" style="left:1114px;top:626px;stroke:#d6d6d6;stroke-width:1.1" width="15" height="16"><path d="M4 12.5H11.5a3 3 0 0 0 .3-6A4.2 4.2 0 0 0 3.7 7.5A2.5 2.5 0 0 0 4 12.5Z"/></svg>
<div class="a dts" style="left:1135px;top:627px;color:#e6e6e6">Push messaging</div>
<svg class="ic" style="left:1114px;top:647px;stroke:#d6d6d6;stroke-width:1.1" width="15" height="16"><path d="M1.5 1.5H7.5L10.5 4.5V14.5H1.5Z M7.5 1.5V4.5H10.5"/></svg>
<div class="a dts" style="left:1135px;top:647px;color:#e6e6e6">Reporting API</div>

<!-- red ellipse highlight -->
<div class="a" style="left:1086px;top:166px;width:170px;height:21px;background:#474747;border:1px solid #707070;border-radius:0 11px 11px 0;border-left:none"></div>
<div class="a dts" style="left:1135px;top:170px;color:#f4f4f4">Storage</div>
<svg class="a ic" style="left:1114px;top:169px;stroke:#d6d6d6;stroke-width:1.1" width="12" height="16"><ellipse cx="6" cy="3" rx="5" ry="2.2"/><path d="M1 3V13a5 2.2 0 0 0 10 0V3"/></svg>
<div class="a" style="left:1071px;top:157px;width:194px;height:36px;border:4px solid #f52a12;border-radius:18px"></div>
<!-- main pane -->
<div class="a" style="left:1293px;top:117px;font-size:14px;font-weight:bold;color:#eaeaea;white-space:nowrap">Storage</div>
<div class="a dtm" style="left:1293px;top:137px">https://gohqo.co/</div>
<div class="a" style="left:1274px;top:163px;width:310px;height:1px;background:#444"></div>
<div class="a" style="left:1293px;top:178px;font-size:13px;font-weight:bold;color:#eaeaea;white-space:nowrap">Usage</div>
<div class="a dtm" style="left:1293px;top:205px">784 B used out of 305,318 MB storage quota</div>
<div class="a dtm" style="left:1293px;top:228px;color:#9fb7e8;text-decoration:underline">Learn more</div>
<svg class="a" style="left:1292px;top:248px" width="105" height="105"><circle cx="52.5" cy="52.5" r="41.3" fill="none" stroke="#a48be3" stroke-width="20.5"/></svg>
<div class="a" style="left:1319px;top:294px;width:50px;text-align:center;font-size:11px;font-weight:bold;color:#f0f0f0">784 B</div>
<svg class="a" style="left:1332px;top:247px" width="13" height="19"><path d="M1 1V15L4.5 11.5L7 17.5L9 16.5L6.7 11H11.5Z" fill="#fff" stroke="#222" stroke-width="1"/></svg>
<div class="a dtm" style="left:1462px;top:255px">784 B</div>
<div class="a" style="left:1499px;top:255px;width:11px;height:11px;background:#a48be3"></div>
<div class="a dtm" style="left:1518px;top:255px">IndexedDB</div>
<div class="a dtm" style="left:1460px;top:275px;font-weight:bold;color:#f0f0f0">784 B</div>
<div class="a" style="left:1499px;top:275px;width:11px;height:11px;border:1px solid #777"></div>
<div class="a dtm" style="left:1518px;top:275px;font-weight:bold;color:#f0f0f0">Total</div>
<div class="a cb" style="left:1293px;top:366px"></div>
<div class="a dtm" style="left:1310px;top:365px">Simulate custom storage quota</div>
<div class="a" style="left:1274px;top:396px;width:310px;height:1px;background:#444"></div>
<div class="a" style="left:1293px;top:414px;width:96px;height:22px;border:1px solid #4f6f9c;border-radius:11px"></div>
<div class="a" style="left:1293px;top:419px;width:96px;text-align:center;font-size:11px;font-weight:bold;color:#a8c7fa;white-space:nowrap">Clear site data</div>
<div class="a cb" style="left:1405px;top:420px"></div>
<div class="a dtm" style="left:1421px;top:419px">including third-party cookies</div>
<div class="a" style="left:1274px;top:450px;width:310px;height:1px;background:#444"></div>
<div class="a" style="left:1293px;top:465px;font-size:13px;font-weight:bold;color:#eaeaea;white-space:nowrap">Application</div>
<div class="a" style="left:1293px;top:496px;width:12px;height:12px;background:#a8c7fa;border-radius:2px"></div><svg class="a" style="left:1294px;top:497px" width="10" height="10"><path d="M2 5.2L4.2 7.5L8.3 2.3" fill="none" stroke="#1f1f1f" stroke-width="1.4"/></svg>
<div class="a dtm" style="left:1310px;top:495px">Unregister service workers</div>
<div class="a" style="left:1293px;top:573px;width:12px;height:12px;background:#a8c7fa;border-radius:2px"></div><svg class="a" style="left:1294px;top:574px" width="10" height="10"><path d="M2 5.2L4.2 7.5L8.3 2.3" fill="none" stroke="#1f1f1f" stroke-width="1.4"/></svg>
<div class="a dtm" style="left:1310px;top:572px">Local and session storage</div>
<div class="a" style="left:1293px;top:603px;width:12px;height:12px;background:#a8c7fa;border-radius:2px"></div><svg class="a" style="left:1294px;top:604px" width="10" height="10"><path d="M2 5.2L4.2 7.5L8.3 2.3" fill="none" stroke="#1f1f1f" stroke-width="1.4"/></svg>
<div class="a dtm" style="left:1310px;top:602px">IndexedDB</div>
<div class="a" style="left:1293px;top:633px;width:12px;height:12px;background:#a8c7fa;border-radius:2px"></div><svg class="a" style="left:1294px;top:634px" width="10" height="10"><path d="M2 5.2L4.2 7.5L8.3 2.3" fill="none" stroke="#1f1f1f" stroke-width="1.4"/></svg>
<div class="a dtm" style="left:1310px;top:632px">Web SQL</div>

<div class="a" style="left:1274px;top:527px;width:310px;height:1px;background:#444"></div>
<div class="a" style="left:1293px;top:542px;font-size:13px;font-weight:bold;color:#eaeaea;white-space:nowrap">Storage</div>
<!-- main scrollbars -->
<div class="a" style="left:1584px;top:99px;width:14px;height:551px;background:#2f2f2f"></div>
<svg class="a" style="left:1586px;top:106px" width="10" height="7"><path d="M0.5 6.5L5 0.5L9.5 6.5Z" fill="#a8a8a8"/></svg>
<div class="a" style="left:1586px;top:120px;width:9px;height:450px;background:#a8a8a8;border-radius:5px"></div>
<svg class="a" style="left:1586px;top:637px" width="10" height="7"><path d="M0.5 0.5L5 6.5L9.5 0.5Z" fill="#a8a8a8"/></svg>
<div class="a" style="left:1274px;top:650px;width:310px;height:16px;background:#2e2e2e"></div>
<svg class="a" style="left:1283px;top:654px" width="7" height="10"><path d="M6.5 0.5L0.5 5L6.5 9.5Z" fill="#a8a8a8"/></svg>
<div class="a" style="left:1296px;top:655px;width:220px;height:8px;background:#a8a8a8;border-radius:4px"></div>
<svg class="a" style="left:1570px;top:654px" width="7" height="10"><path d="M0.5 0.5L6.5 5L0.5 9.5Z" fill="#a8a8a8"/></svg>

<!-- console messages -->
<div class="a" style="left:1086px;top:716px;width:512px;height:136px;background:#2b2b2b;overflow:hidden">
 <div class="a" style="left:4px;top:-6px;width:490px;height:44px;background:#4e3b3b;border-radius:0 0 6px 6px"></div>
 <div class="a mono" style="left:51px;top:-5px;color:#e8dcdc">at t._next (<span class="lk">755.87be5f5d.js:19:754879</span>)</div>
 <div class="a mono" style="left:51px;top:9px;color:#e8dcdc">at t.next (<span class="lk">755.87be5f5d.js:19:758373</span>)</div>
 <div class="a mono" style="left:51px;top:23px;color:#e8dcdc">at <span class="lk">755.87be5f5d.js:19:792153</span></div>
 <div class="a" style="left:4px;top:42px;width:490px;height:20px;background:#413c29;border-radius:6px"></div>
 <svg class="a" style="left:12px;top:46px" width="13" height="12"><path d="M6.5 0.5L12.5 11.5H0.5Z" fill="#f4a161"/><path d="M6.5 4V7.5" stroke="#413c29" stroke-width="1.3"/><circle cx="6.5" cy="9.3" r="0.7" fill="#413c29"/></svg>
 <svg class="a" style="left:33px;top:48px" width="8" height="9"><path d="M0.5 0.5L7.5 4.5L0.5 8.5Z" fill="#e0e0e0"/></svg>
 <div class="a mono" style="left:45px;top:48px;color:#f2e6a8">Web tracking has not been initialized</div>
 <div class="a mono" style="left:336px;top:46px" ><span class="lk">755.87be5f5d.js:18</span></div>
 <svg class="ic" style="left:454px;top:45px;stroke:#8fb0e8;stroke-width:1.1" width="14" height="12"><path d="M5 1.5H9Q10 1.5 9.7 2.6L7.6 9.6Q7.2 10.8 6 10.8H2.6Q1.6 10.8 1.9 9.7L4 2.6Q4.3 1.5 5 1.5Z"/><path d="M9.5 1.5H11.6Q12.6 1.5 12.3 2.6L10.2 9.6Q9.8 10.8 8.6 10.8H6.3"/></svg>
 <div class="a mono" style="left:27px;top:69px;color:#e3e3e3">[NEW] Explain Console errors by using Copilot in</div>
 <div class="a mono" style="left:27px;top:83px;color:#e3e3e3">Edge: click&nbsp;&nbsp;&nbsp;&nbsp;to explain an error. <span class="lk">Learn more</span></div>
 <svg class="ic" style="left:101px;top:84px;stroke:#8fb0e8;stroke-width:1.1" width="14" height="12"><path d="M5 1.5H9Q10 1.5 9.7 2.6L7.6 9.6Q7.2 10.8 6 10.8H2.6Q1.6 10.8 1.9 9.7L4 2.6Q4.3 1.5 5 1.5Z"/><path d="M9.5 1.5H11.6Q12.6 1.5 12.3 2.6L10.2 9.6Q9.8 10.8 8.6 10.8H6.3"/></svg>
 <div class="a" style="left:362px;top:71px;width:109px;height:23px;background:#474747;border-radius:3px;font-size:11.5px;color:#e8e8e8;text-align:center;line-height:23px">Don't show again</div>
 <svg class="a ic" style="left:11px;top:104px;stroke:#7aa5f0;stroke-width:1.3" width="8" height="12"><path d="M1.5 1.5L6 6L1.5 10.5"/></svg>
 <svg class="a" style="left:500px;top:8px" width="10" height="7"><path d="M0.5 6.5L5 0.5L9.5 6.5Z" fill="#a8a8a8"/></svg>
 <div class="a" style="left:500px;top:90px;width:9px;height:26px;background:#a8a8a8;border-radius:5px"></div>
 <svg class="a" style="left:500px;top:120px" width="10" height="7"><path d="M0.5 0.5L5 6.5L9.5 0.5Z" fill="#a8a8a8"/></svg>
</div>
<!-- drawer -->
<div class="a" style="left:1086px;top:666px;width:512px;height:1px;background:#4a4a4a"></div>
<div class="a" style="left:1086px;top:667px;width:512px;height:26px;background:#3a3a3a"></div>
<div class="a" style="left:1086px;top:669px;width:60px;height:24px;background:#282828;border-radius:4px 4px 0 0"></div>
<div class="a" style="left:1096px;top:676px;font-size:11.5px;color:#a8c7fa;white-space:nowrap;-webkit-text-stroke:0.2px #a8c7fa">Console</div>
<div class="a" style="left:1156px;top:676px;font-size:11.5px;color:#cfcfcf;white-space:nowrap">Issues</div>
<svg class="ic" style="left:1203px;top:673px;stroke:#c8c8c8;stroke-width:1.2" width="14" height="14"><path d="M7 0.5V13.5M0.5 7H13.5"/></svg>
<svg class="ic" style="left:1546px;top:672px;stroke:#c8c8c8;stroke-width:1.1" width="18" height="15"><path d="M6.5 8.5V12.5a1 1 0 0 0 1 1H15.5a1 1 0 0 0 1-1V8.5H6.5"/><path d="M6.5 8V4.5M16.5 8V4.5M8 3H9.5M11 3H12.5M14 3H15.5" /><path d="M4.5 5.5A3.5 3.5 0 0 0 3 11.5M1.5 9.8L3 11.8L5 10.5"/></svg>
<svg class="ic" style="left:1573px;top:672px;stroke:#c8c8c8;stroke-width:1.1" width="17" height="15"><rect x="1" y="1.5" width="15" height="12" rx="1"/><path d="M1 10.5H16M8.5 4V8.5M6.8 6.8L8.5 8.5L10.2 6.8"/></svg>
<div class="a" style="left:1086px;top:693px;width:512px;height:23px;background:#282828"></div>
<svg class="ic" style="left:1093px;top:697px;stroke:#c8c8c8;stroke-width:1.1" width="16" height="14"><rect x="1" y="1.5" width="14" height="11" rx="1"/><rect x="1.5" y="2" width="4" height="10" fill="#c8c8c8" stroke="none"/><path d="M7 7H12M10 5L12 7L10 9"/></svg>
<svg class="ic" style="left:1120px;top:696px;stroke:#c8c8c8;stroke-width:1.2" width="16" height="16"><circle cx="8" cy="8" r="6.8"/><path d="M3.2 12.8L12.8 3.2"/></svg>
<div class="a" style="left:1143px;top:695px;width:45px;height:19px;background:#3b3b3b;border-radius:3px"></div>
<div class="a" style="left:1148px;top:698px;font-size:11.5px;color:#cfcfcf">top</div>
<svg class="a" style="left:1171px;top:702px" width="10" height="7"><path d="M0 0H10L5 7Z" fill="#d0d0d0"/></svg>
<svg class="ic" style="left:1195px;top:698px;stroke:#c8c8c8;stroke-width:1.2" width="16" height="12"><path d="M1 8a7.5 6.5 0 0 1 14 0"/><circle cx="8" cy="7.5" r="2.3"/></svg>
<div class="a" style="left:1220px;top:695px;width:196px;height:19px;background:#3b3b3b;border-radius:10px"></div>
<svg class="ic" style="left:1229px;top:699px;stroke:#c8c8c8;stroke-width:1.2" width="12" height="10"><path d="M0.5 1H11.5M2.5 4.5H9.5M4.5 8H7.5"/></svg>
<div class="a" style="left:1245px;top:698px;font-size:11.5px;color:#bdbdbd">Filter</div>
<div class="a" style="left:1423px;top:698px;font-size:11.5px;color:#cfcfcf;white-space:nowrap">Default levels</div>
<svg class="a" style="left:1496px;top:702px" width="10" height="7"><path d="M0 0H10L5 7Z" fill="#d0d0d0"/></svg>
<div class="a" style="left:1518px;top:698px;font-size:11.5px;color:#cfcfcf;white-space:nowrap">No Issues</div>
<svg class="ic" style="left:1573px;top:696px;stroke:#c8c8c8;stroke-width:1.1" width="16" height="16"><path d="M6.8 1H9.2L9.6 3.1L11.2 4L13.2 3.2L14.4 5.3L12.8 6.7V9.3L14.4 10.7L13.2 12.8L11.2 12L9.6 12.9L9.2 15H6.8L6.4 12.9L4.8 12L2.8 12.8L1.6 10.7L3.2 9.3V6.7L1.6 5.3L2.8 3.2L4.8 4L6.4 3.1Z"/><circle cx="8" cy="8" r="2.3"/></svg>

</body></html>
